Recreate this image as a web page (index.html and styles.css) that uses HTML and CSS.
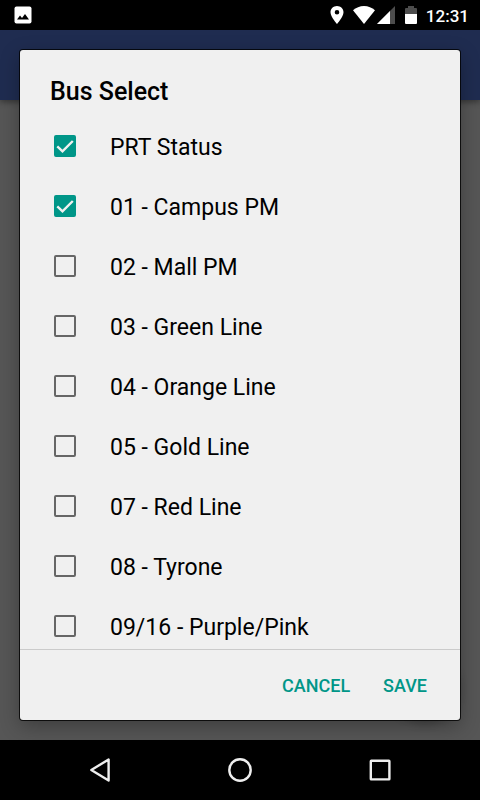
FILE: index.html
```html
<!DOCTYPE html>
<html lang="en">
<head>
<meta charset="utf-8">
<meta name="viewport" content="width=device-width, initial-scale=1">
<title>Bus Select</title>
<link rel="stylesheet" href="styles.css">
</head>
<body>
<div class="status-bar">
  <svg class="status-picture" width="18" height="18" viewBox="0 0 18 18" aria-hidden="true"><rect x="0.5" y="0.5" width="17" height="17" rx="2" fill="#fff"/><path d="M3 13.5 6 9.5 8 12 11 8 15 13.5z" fill="#000"/></svg>
  <svg class="status-pin" width="14" height="18" viewBox="0 0 14 18" aria-hidden="true"><path fill="#fff" fill-rule="evenodd" d="M7 0C3.300 0 .5 2.800.5 6.300.5 11 7 18 7 18s6.500-7 6.500-11.700C13.500 2.800 10.700 0 7 0zm0 8.600a2.300 2.300 0 1 1 0-4.600 2.300 2.300 0 0 1 0 4.600z"/></svg>
  <svg class="status-wifi" width="22" height="18" viewBox="0 0 22 18" aria-hidden="true"><path fill="#fff" d="M11 18 0 4.300C3 1.700 6.800 0 11 0s8 1.700 11 4.300z"/></svg>
  <svg class="status-cell" width="18" height="18" viewBox="0 0 18 18" aria-hidden="true"><path fill="#4d4d4d" d="M0 18 18 0v18z"/><path fill="#fff" d="M0 18 13 5v13z"/></svg>
  <svg class="status-battery" width="12" height="18" viewBox="0 0 12 18" aria-hidden="true"><path fill="#4d4d4d" d="M0 3q0-1 1-1h2V0h6v2h2q1 0 1 1v5H0z"/><path fill="#fff" d="M0 8h12v9q0 1-1 1H1q-1 0-1-1z"/></svg>
  <time class="clock">12:31</time>
</div>
<main class="screen">
  <div class="app-bar"></div>
  <div class="fab-shadow"></div>
  <form class="dialog" role="dialog" aria-labelledby="dialog-title">
    <h1 class="dialog-title" id="dialog-title">Bus Select</h1>
    <div class="options">
      <label class="option"><input type="checkbox" checked><span>PRT Status</span></label>
      <label class="option"><input type="checkbox" checked><span>01 - Campus PM</span></label>
      <label class="option"><input type="checkbox"><span>02 - Mall PM</span></label>
      <label class="option"><input type="checkbox"><span>03 - Green Line</span></label>
      <label class="option"><input type="checkbox"><span>04 - Orange Line</span></label>
      <label class="option"><input type="checkbox"><span>05 - Gold Line</span></label>
      <label class="option"><input type="checkbox"><span>07 - Red Line</span></label>
      <label class="option"><input type="checkbox"><span>08 - Tyrone</span></label>
      <label class="option"><input type="checkbox"><span>09/16 - Purple/Pink</span></label>
    </div>
    <div class="actions">
      <button type="button">CANCEL</button>
      <button type="submit">SAVE</button>
    </div>
  </form>
</main>
<nav class="nav-bar" aria-label="System navigation">
  <button type="button" aria-label="Back"><svg width="30" height="30" viewBox="0 0 30 30"><path d="M23.600 4.500v21L6.300 15z" stroke-linejoin="round"/></svg></button>
  <button type="button" aria-label="Home"><svg width="30" height="30" viewBox="0 0 30 30"><circle cx="15" cy="15" r="10.700"/></svg></button>
  <button type="button" aria-label="Overview"><svg width="30" height="30" viewBox="0 0 30 30"><rect x="5.800" y="5.800" width="18.600" height="18.600" rx="0.500"/></svg></button>
</nav>
</body>
</html>
```
FILE: styles.css
```css
* {
  box-sizing: border-box;
}

body {
  margin: 0;
  height: 100vh;
  display: flex;
  flex-direction: column;
  background: #000;
  color: #000;
  font-family: Roboto, "Noto Sans", sans-serif;
}

button {
  border: 0;
  padding: 0;
  background: none;
  font: inherit;
}

.status-bar {
  flex: none;
  height: 30px;
  padding: 0 11px 0 14px;
  display: flex;
  align-items: center;
  color: #fff;
}

.status-picture {
  margin-right: auto;
}

.status-wifi {
  margin-left: 9px;
}

.status-cell {
  margin-left: 2px;
}

.status-battery {
  margin: 0 9px 0 10px;
}

.clock {
  padding-top: 2px;
  font-size: 17px;
  line-height: 28px;
  font-weight: 500;
}

.screen {
  flex: 1;
  min-height: 0;
  display: grid;
  grid-template: minmax(0, 1fr) / minmax(0, 1fr);
  background: #565656;
  overflow: hidden;
}

.screen > * {
  grid-area: 1 / 1;
}

.app-bar {
  height: 70px;
  background: #1f2c50;
  box-shadow: 0 2px 6px rgba(0, 0, 0, 0.4);
}

.fab-shadow {
  place-self: end;
  width: 70px;
  height: 70px;
  margin: 20px;
  border-radius: 50%;
  box-shadow: 0 4px 10px rgba(0, 0, 0, 0.2);
}

.dialog {
  position: relative;
  margin: 20px;
  display: flex;
  flex-direction: column;
  border-radius: 3px;
  background: #f0f0f0;
  box-shadow: 0 0 0 1px rgba(0, 0, 0, 0.8), 0 6px 20px rgba(0, 0, 0, 0.3);
}

.dialog-title {
  margin: 0;
  padding: 26px 30px 8px;
  font-size: 25px;
  line-height: 32px;
  font-weight: 500;
}

.options {
  flex: 1;
  min-height: 0;
  overflow: hidden;
  border-bottom: 1px solid #cbcbcb;
}

.option {
  height: 60px;
  padding: 0 34px;
  display: flex;
  align-items: center;
  gap: 34px;
  font-size: 23px;
  line-height: 30px;
}

.option span {
  padding-top: 4px;
}

.option input {
  appearance: none;
  flex: none;
  width: 22px;
  height: 22px;
  margin: 0;
  border: 2px solid #666;
  border-radius: 2px;
}

.option input:checked {
  border-color: #009688;
  background: #009688 url("data:image/svg+xml,%3Csvg xmlns='http://www.w3.org/2000/svg' viewBox='0 0 18 18'%3E%3Cpath d='M1.300 9.300 6.500 14.300 16.800 4' fill='none' stroke='%23f0f0f0' stroke-width='2.400'/%3E%3C/svg%3E") center / 18px no-repeat;
}

.actions {
  flex: none;
  height: 70px;
  padding: 2px 33px 0;
  display: flex;
  align-items: center;
  justify-content: flex-end;
  gap: 33px;
  color: #009688;
}

.actions button {
  color: inherit;
  font-size: 18px;
  line-height: 24px;
  font-weight: 500;
}

.nav-bar {
  flex: none;
  height: 60px;
  padding: 0 30px;
  display: grid;
  grid-template-columns: repeat(3, 1fr);
}

.nav-bar button {
  display: grid;
  place-items: center;
}

.nav-bar svg {
  fill: none;
  stroke: #eee;
  stroke-width: 2.400px;
}
```
